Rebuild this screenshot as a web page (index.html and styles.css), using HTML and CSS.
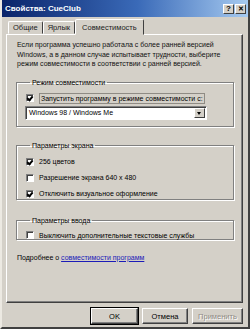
FILE: index.html
```html
<!DOCTYPE html>
<html lang="ru">
<head>
    <meta charset="UTF-8">
    <title>Свойства: CueClub</title>
    <link rel="stylesheet" href="styles.css">
</head>
<body>
    <div class="window">
        <div class="titlebar">
            <span class="title-text">Свойства: CueClub</span>
            <div class="title-buttons">
                <span class="tb-btn">?</span>
                <span class="tb-btn tb-close">&#x2715;</span>
            </div>
        </div>

        <div class="tabs">
            <span class="tab">Общие</span>
            <span class="tab">Ярлык</span>
            <span class="tab active">Совместимость</span>
        </div>

        <div class="panel">
            <p class="intro">
                Если программа успешно работала с более ранней версией<br>
                Windows, а в данном случае испытывает трудности, выберите<br>
                режим совместимости в соответствии с ранней версией.
            </p>

            <fieldset class="group group-mode">
                <legend>Режим совместимости</legend>
                <label class="check-row">
                    <span class="checkbox checked"></span>
                    <span class="focus-label">Запустить программу в режиме совместимости с:</span>
                </label>
                <div class="select">
                    <span class="select-value">Windows 98 / Windows Me</span>
                    <span class="select-arrow"></span>
                </div>
            </fieldset>

            <fieldset class="group group-screen">
                <legend>Параметры экрана</legend>
                <label class="check-row">
                    <span class="checkbox checked"></span>
                    <span>256 цветов</span>
                </label>
                <label class="check-row">
                    <span class="checkbox"></span>
                    <span>Разрешение экрана 640 x 480</span>
                </label>
                <label class="check-row">
                    <span class="checkbox checked"></span>
                    <span>Отключить визуальное оформление</span>
                </label>
            </fieldset>

            <fieldset class="group group-input">
                <legend>Параметры ввода</legend>
                <label class="check-row">
                    <span class="checkbox"></span>
                    <span>Выключить дополнительные текстовые службы</span>
                </label>
            </fieldset>

            <p class="more">Подробнее о <a href="#">совместимости программ</a></p>
        </div>

        <div class="buttons">
            <button class="btn btn-ok">OK</button>
            <button class="btn btn-cancel">Отмена</button>
            <button class="btn btn-apply" disabled>Применить</button>
        </div>
    </div>
</body>
</html>
```

FILE: styles.css
```css
* {
    margin: 0;
    padding: 0;
    box-sizing: border-box;
}

body {
    background: #d4d0c8;
    font-family: 'Liberation Sans', Arial, sans-serif;
    font-size: 7px;
    color: #000;
}

.window {
    width: 250px;
    height: 329px;
    background: #d4d0c8;
    border-left: 2px solid #ece9e2;
    border-right: 2px solid #404040;
    border-bottom: 2px solid #404040;
    display: flex;
    flex-direction: column;
}

/* title bar */
.titlebar {
    height: 17px;
    flex: none;
    background: linear-gradient(to right, #0a246a 0%, #3a6ab8 55%, #a6caf0 100%);
    display: flex;
    align-items: center;
    justify-content: space-between;
    padding: 0 2px 0 3px;
}

.title-text {
    color: #fff;
    font-weight: bold;
    font-size: 8px;
}

.title-buttons {
    display: flex;
    gap: 1px;
}

.tb-btn {
    width: 11px;
    height: 10px;
    background: #d4d0c8;
    border: 1px solid;
    border-color: #fff #404040 #404040 #fff;
    font-size: 8px;
    font-weight: bold;
    line-height: 8px;
    text-align: center;
}

.tb-close {
    font-size: 7px;
}

/* tabs */
.tabs {
    display: flex;
    align-items: flex-end;
    height: 16px;
    flex: none;
    padding-left: 6px;
    margin-top: 1px;
}

.tab {
    height: 13px;
    padding: 0 4px;
    border: 1px solid;
    border-color: #fff #404040 transparent #fff;
    border-radius: 2px 2px 0 0;
    line-height: 11px;
    font-size: 7.5px;
    color: #222;
}

.tab.active {
    height: 16px;
    padding: 2px 6px 0;
    margin-bottom: -1px;
    background: #d4d0c8;
    position: relative;
    z-index: 1;
}

/* tab page */
.panel {
    height: 269px;
    flex: none;
    margin: 0 5px 0 4px;
    border: 1px solid;
    border-color: #fff #404040 #404040 #fff;
    box-shadow: inset -1px -1px 0 #808080;
    padding: 5px 9px 0 10px;
    display: flex;
    flex-direction: column;
}

.intro {
    line-height: 9.6px;
    color: #111;
    white-space: nowrap;
}

.group {
    border: 1px solid #808080;
    box-shadow: inset 1px 1px 0 #fff, 1px 1px 0 #fff;
    padding: 0 0 0 9px;
    margin-right: -1px;
    margin-left: -1px;
}

.group legend {
    margin-left: 4px;
    padding: 0 2px;
    line-height: 9px;
}

.group-mode {
    margin-top: 9px;
    height: 49px;
    padding-top: 4px;
}

.group-screen {
    margin-top: 14px;
    height: 59px;
    padding-top: 4px;
}

.group-input {
    margin-top: 16px;
    height: 24px;
    padding-top: 3px;
}

.check-row {
    display: flex;
    align-items: center;
    height: 15px;
    gap: 5px;
    white-space: nowrap;
}

.group-screen .check-row {
    height: 16px;
}

.checkbox {
    width: 8px;
    height: 8px;
    flex: none;
    background: #fff;
    border: 1px solid;
    border-color: #808080 #fff #fff #808080;
    box-shadow: inset 1px 1px 0 #404040;
    position: relative;
}

.checkbox.checked::after {
    content: "";
    position: absolute;
    left: 1px;
    top: 0;
    width: 2px;
    height: 4px;
    border: solid #000;
    border-width: 0 2px 2px 0;
    transform: rotate(40deg);
}

.focus-label {
    border: 1px solid #8f8b84;
    padding: 0 1px;
    line-height: 9px;
}

.select {
    width: 182px;
    height: 14px;
    margin-left: -1px;
    background: #fff;
    border: 1px solid;
    border-color: #808080 #fff #fff #808080;
    box-shadow: inset 1px 1px 0 #404040;
    display: flex;
    align-items: center;
    justify-content: space-between;
    padding: 1px 1px 1px 3px;
}

.select-arrow {
    width: 11px;
    height: 10px;
    background: #d4d0c8;
    border: 1px solid;
    border-color: #fff #404040 #404040 #fff;
    position: relative;
}

.select-arrow::after {
    content: "";
    position: absolute;
    left: 2px;
    top: 3px;
    border-left: 2.5px solid transparent;
    border-right: 2.5px solid transparent;
    border-top: 3px solid #000;
}

.more {
    margin-top: 14px;
}

.more a {
    color: #1b1bb8;
}

/* dialog buttons */
.buttons {
    display: flex;
    justify-content: flex-end;
    gap: 4px;
    padding: 5px 5px 0 0;
}

.btn {
    height: 16px;
    background: #d4d0c8;
    font-family: inherit;
    font-size: 7.5px;
    color: #000;
    border: 1px solid;
    border-color: #fff #404040 #404040 #fff;
    box-shadow: inset -1px -1px 0 #808080;
}

.btn-ok {
    width: 47px;
    outline: 1px solid #000;
}

.btn-cancel {
    width: 46px;
}

.btn-apply {
    width: 51px;
}

.btn:disabled {
    color: #8f8b84;
    text-shadow: 1px 1px 0 #fff;
}
```
